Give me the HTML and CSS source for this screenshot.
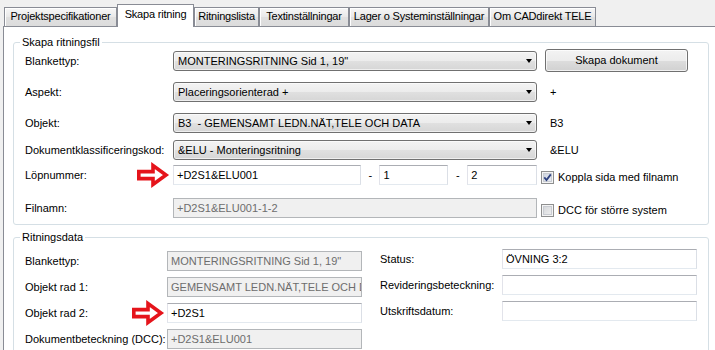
FILE: index.html
```html
<!DOCTYPE html>
<html lang="sv">
<head>
<meta charset="utf-8">
<title>Skapa ritning</title>
<link rel="stylesheet" href="styles.css">
</head>
<body>
<div class="window">
  <div class="tabstrip">
    <div class="tab tab-proj">Projektspecifikationer</div>
    <div class="tab tab-skapa active">Skapa ritning</div>
    <div class="tab tab-lista">Ritningslista</div>
    <div class="tab tab-text">Textinställningar</div>
    <div class="tab tab-lager">Lager o Systeminställningar</div>
    <div class="tab tab-om">Om CADdirekt TELE</div>
  </div>
  <div class="panel">
    <fieldset class="group group-file">
      <legend>Skapa ritningsfil</legend>
      <div class="file-grid">
        <div class="lbl">Blankettyp:</div>
        <div class="combo"><span>MONTERINGSRITNING Sid 1, 19"</span><span class="caret"></span></div>
        <button class="btn" type="button">Skapa dokument</button>

        <div class="lbl">Aspekt:</div>
        <div class="combo"><span>Placeringsorienterad +</span><span class="caret"></span></div>
        <div class="side">+</div>

        <div class="lbl">Objekt:</div>
        <div class="combo"><span>B3&nbsp; - GEMENSAMT LEDN.NÄT,TELE OCH DATA</span><span class="caret"></span></div>
        <div class="side">B3</div>

        <div class="lbl">Dokumentklassificeringskod:</div>
        <div class="combo"><span>&amp;ELU - Monteringsritning</span><span class="caret"></span></div>
        <div class="side">&amp;ELU</div>

        <div class="lbl">Löpnummer:
          <svg class="arrow" width="32" height="26" viewBox="0 0 32 26"><path d="M1.8 9.6H16V3.6L29 13L16 22.4V16.6H1.8Z"/></svg>
        </div>
        <div class="lop">
          <div class="tb tb-lop">+D2S1&amp;ELU001</div>
          <div class="dash">-</div>
          <div class="tb tb-small">1</div>
          <div class="dash dash-wide">-</div>
          <div class="tb tb-small tb-last">2</div>
        </div>
        <div class="chk">
          <span class="cb checked"><svg width="9" height="9" viewBox="0 0 9 9"><path d="M1.3 4.4L3.5 7L7.8 1.4"/></svg></span>
          <span>Koppla sida med filnamn</span>
        </div>

        <div class="lbl">Filnamn:</div>
        <div class="tb dis">+D2S1&amp;ELU001-1-2</div>
        <div class="chk">
          <span class="cb"></span>
          <span>DCC för större system</span>
        </div>
      </div>
    </fieldset>

    <fieldset class="group group-data">
      <legend>Ritningsdata</legend>
      <div class="data">
        <div class="data-left">
          <div class="lbl">Blankettyp:</div>
          <div class="tb dis">MONTERINGSRITNING Sid 1, 19"</div>
          <div class="lbl">Objekt rad 1:</div>
          <div class="tb dis">GEMENSAMT LEDN.NÄT,TELE OCH DATA</div>
          <div class="lbl">Objekt rad 2:
            <svg class="arrow arrow-2" width="32" height="26" viewBox="0 0 32 26"><path d="M1.8 9.6H16V3.6L29 13L16 22.4V16.6H1.8Z"/></svg>
          </div>
          <div class="tb">+D2S1</div>
          <div class="lbl">Dokumentbeteckning (DCC):</div>
          <div class="tb dis">+D2S1&amp;ELU001</div>
        </div>
        <div class="data-right">
          <div class="lbl">Status:</div>
          <div class="tb">ÖVNING 3:2</div>
          <div class="lbl">Revideringsbeteckning:</div>
          <div class="tb"></div>
          <div class="lbl">Utskriftsdatum:</div>
          <div class="tb"></div>
        </div>
      </div>
    </fieldset>
  </div>
</div>
</body>
</html>
```

FILE: styles.css
```css
html, body {
  margin: 0;
  padding: 0;
}

body {
  width: 715px;
  height: 350px;
  overflow: hidden;
  background: #f0f0f0;
  color: #000;
  font-family: "Liberation Sans", Arial, sans-serif;
  font-size: 11px;
  line-height: 1;
}

/* ---------- tabs ---------- */
.tabstrip {
  display: flex;
  align-items: flex-end;
  height: 26px;
  padding-left: 4px;
}

.tab {
  box-sizing: border-box;
  height: 19px;
  border: 1px solid #898c95;
  border-bottom: 0;
  background: linear-gradient(#f7f7f7, #e9e9e9 50%, #e0e0e0 51%, #dcdcdc);
  box-shadow: inset 1px 1px 0 #fff;
  line-height: 17px;
  letter-spacing: -0.2px;
  text-align: center;
  white-space: nowrap;
  overflow: hidden;
}

.tab.active {
  position: relative;
  z-index: 1;
  height: 23px;
  margin-bottom: -1px;
  background: #fff;
  box-shadow: none;
  line-height: 19px;
}

.tab-proj { width: 113px; }
.tab-skapa { width: 77px; }
.tab-lista { width: 65px; }
.tab-text { width: 90px; }
.tab-lager { width: 140px; }
.tab-om { width: 107px; }

/* ---------- panel ---------- */
.panel {
  box-sizing: border-box;
  width: 716px;
  height: 324px;
  margin-left: 3px;
  padding-top: 8px;
  border: 1px solid #898c95;
  border-bottom: 0;
  background: #fff;
  overflow: hidden;
}

.group {
  margin: 0 9px;
  padding: 0;
  min-width: 0;
  border: 1px solid #d5dfe5;
  border-radius: 3px;
}

.group legend {
  margin-left: 6px;
  padding: 0 2px;
  line-height: 14px;
}

.group-data {
  margin-top: 5px;
  padding-bottom: 20px;
}

/* ---------- first group ---------- */
.file-grid {
  display: grid;
  grid-template-columns: 148px 364px 1fr;
  grid-template-rows: 31px 31px 27px 25px 33px 20px;
  align-items: start;
  padding: 2px 0 6px 11px;
}

.lbl {
  display: flex;
  align-items: center;
  height: 20px;
  line-height: 20px;
  white-space: nowrap;
}

.arrow {
  flex: none;
  margin-left: auto;
  margin-right: 4px;
  overflow: visible;
}

.arrow path {
  fill: #fff;
  stroke: #e5141b;
  stroke-width: 3.6;
  stroke-linejoin: miter;
}

.arrow-2 {
  margin-right: 3px;
}

.combo {
  box-sizing: border-box;
  display: flex;
  align-items: center;
  height: 20px;
  padding-left: 4px;
  border: 1px solid #707070;
  border-radius: 3px;
  background: linear-gradient(#f3f3f3, #ececec 50%, #e0e0e0 51%, #d6d6d6);
  box-shadow: inset 0 0 0 1px rgba(255, 255, 255, 0.6);
  white-space: nowrap;
}

.caret {
  width: 0;
  height: 0;
  margin-left: auto;
  margin-right: 4px;
  border-top: 4px solid #000;
  border-left: 3.5px solid transparent;
  border-right: 3.5px solid transparent;
}

.btn {
  box-sizing: border-box;
  width: 143px;
  height: 23px;
  margin: -2px 0 0 8px;
  padding: 0;
  border: 1px solid #707070;
  border-radius: 3px;
  background: linear-gradient(#f3f3f3, #ececec 50%, #dddddd 51%, #d1d1d1);
  box-shadow: inset 0 0 0 1px rgba(255, 255, 255, 0.7);
  color: #000;
  font: inherit;
}

.side {
  margin-left: 13px;
  line-height: 20px;
}

.tb {
  box-sizing: border-box;
  height: 20px;
  padding-left: 3px;
  border: 1px solid;
  border-color: #abadb3 #dbdfe6 #e3e9ef #e2e3ea;
  background: #fff;
  line-height: 18px;
  white-space: nowrap;
  overflow: hidden;
}

.tb.dis {
  border-color: #b3b6b9;
  background: #f0f0f0;
  color: #6d6d6d;
}

.lop {
  display: flex;
  align-items: flex-start;
}

.tb-lop { width: 189px; }
.tb-small { width: 69px; }
.tb-last { width: 70px; }

.dash {
  width: 18px;
  line-height: 20px;
  text-align: center;
}

.dash-wide {
  width: 19px;
}

.chk {
  display: flex;
  align-items: center;
  gap: 4px;
  height: 20px;
  margin: 2px 0 0 4px;
  white-space: nowrap;
}

.cb {
  box-sizing: border-box;
  display: flex;
  align-items: center;
  justify-content: center;
  width: 13px;
  height: 13px;
  border: 1px solid #8e8f8f;
  background: #f4f4f4;
  box-shadow: inset 0 0 0 1px #f4f4f4, inset 0 0 0 2px #c9ccd2;
  background-image: linear-gradient(135deg, #d0d2d6, #f3f3f3);
}

.cb.checked {
  background-image: linear-gradient(135deg, #c9d0dc, #eef0f5);
}

.cb svg path {
  fill: none;
  stroke: #2f4280;
  stroke-width: 1.8;
}

/* ---------- second group ---------- */
.data {
  display: flex;
  align-items: flex-start;
  padding: 7px 0 0 11px;
}

.data-left {
  display: grid;
  grid-template-columns: 142px 195px;
  grid-auto-rows: 26px;
  align-items: start;
}

.data-right {
  display: grid;
  grid-template-columns: 122px 195px;
  grid-auto-rows: 26px;
  align-items: start;
  margin: -2px 0 0 18px;
}
```
